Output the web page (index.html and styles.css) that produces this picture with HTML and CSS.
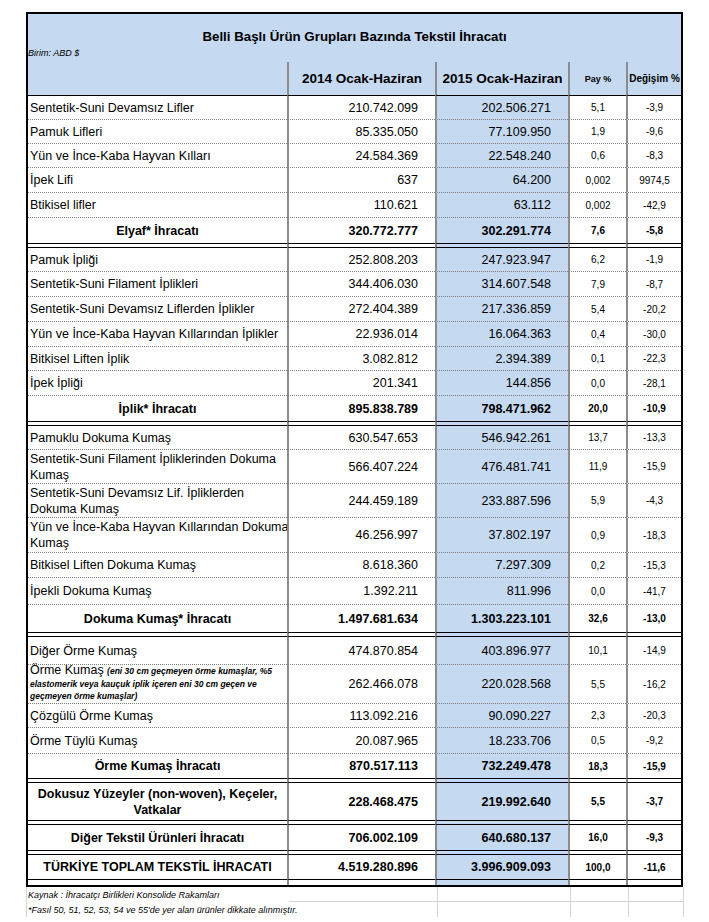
FILE: index.html
```html
<!DOCTYPE html>
<html lang="tr">
<head>
<meta charset="utf-8">
<title>Belli Başlı Ürün Grupları Bazında Tekstil İhracatı</title>
<link rel="stylesheet" href="styles.css">
</head>
<body>
<div class="page">
  <div class="sheet">
    <div class="title-block">
      <div class="title">Belli Başlı Ürün Grupları Bazında Tekstil İhracatı</div>
      <div class="unit">Birim: ABD $</div>
    </div>

    <div class="row head">
      <div class="c c1"></div>
      <div class="c c2"><span>2014 Ocak-Haziran</span></div>
      <div class="c c3"><span>2015 Ocak-Haziran</span></div>
      <div class="c c4"><span>Pay %</span></div>
      <div class="c c5"><span>Değişim %</span></div>
    </div>

    <!-- Elyaf -->
    <div class="row h24"><div class="c c1"><span>Sentetik-Suni Devamsız Lifler</span></div><div class="c c2"><span>210.742.099</span></div><div class="c c3"><span>202.506.271</span></div><div class="c c4"><span>5,1</span></div><div class="c c5"><span>-3,9</span></div></div>
    <div class="row h24"><div class="c c1"><span>Pamuk Lifleri</span></div><div class="c c2"><span>85.335.050</span></div><div class="c c3"><span>77.109.950</span></div><div class="c c4"><span>1,9</span></div><div class="c c5"><span>-9,6</span></div></div>
    <div class="row h24"><div class="c c1"><span>Yün ve İnce-Kaba Hayvan Kılları</span></div><div class="c c2"><span>24.584.369</span></div><div class="c c3"><span>22.548.240</span></div><div class="c c4"><span>0,6</span></div><div class="c c5"><span>-8,3</span></div></div>
    <div class="row h25"><div class="c c1"><span>İpek Lifi</span></div><div class="c c2"><span>637</span></div><div class="c c3"><span>64.200</span></div><div class="c c4"><span>0,002</span></div><div class="c c5"><span>9974,5</span></div></div>
    <div class="row h25"><div class="c c1"><span>Btikisel lifler</span></div><div class="c c2"><span>110.621</span></div><div class="c c3"><span>63.112</span></div><div class="c c4"><span>0,002</span></div><div class="c c5"><span>-42,9</span></div></div>
    <div class="row h25 total"><div class="c c1"><span>Elyaf* İhracatı</span></div><div class="c c2"><span>320.772.777</span></div><div class="c c3"><span>302.291.774</span></div><div class="c c4"><span>7,6</span></div><div class="c c5"><span>-5,8</span></div></div>
    <div class="row gap"><div class="c c1"></div><div class="c c2"></div><div class="c c3"></div><div class="c c4"></div><div class="c c5"></div></div>

    <!-- İplik -->
    <div class="row h24"><div class="c c1"><span>Pamuk İpliği</span></div><div class="c c2"><span>252.808.203</span></div><div class="c c3"><span>247.923.947</span></div><div class="c c4"><span>6,2</span></div><div class="c c5"><span>-1,9</span></div></div>
    <div class="row h25"><div class="c c1"><span>Sentetik-Suni Filament İplikleri</span></div><div class="c c2"><span>344.406.030</span></div><div class="c c3"><span>314.607.548</span></div><div class="c c4"><span>7,9</span></div><div class="c c5"><span>-8,7</span></div></div>
    <div class="row h25"><div class="c c1"><span>Sentetik-Suni Devamsız Liflerden İplikler</span></div><div class="c c2"><span>272.404.389</span></div><div class="c c3"><span>217.336.859</span></div><div class="c c4"><span>5,4</span></div><div class="c c5"><span>-20,2</span></div></div>
    <div class="row h25"><div class="c c1"><span>Yün ve İnce-Kaba Hayvan Kıllarından İplikler</span></div><div class="c c2"><span>22.936.014</span></div><div class="c c3"><span>16.064.363</span></div><div class="c c4"><span>0,4</span></div><div class="c c5"><span>-30,0</span></div></div>
    <div class="row h24"><div class="c c1"><span>Bitkisel Liften İplik</span></div><div class="c c2"><span>3.082.812</span></div><div class="c c3"><span>2.394.389</span></div><div class="c c4"><span>0,1</span></div><div class="c c5"><span>-22,3</span></div></div>
    <div class="row h25"><div class="c c1"><span>İpek İpliği</span></div><div class="c c2"><span>201.341</span></div><div class="c c3"><span>144.856</span></div><div class="c c4"><span>0,0</span></div><div class="c c5"><span>-28,1</span></div></div>
    <div class="row h25 total"><div class="c c1"><span>İplik* İhracatı</span></div><div class="c c2"><span>895.838.789</span></div><div class="c c3"><span>798.471.962</span></div><div class="c c4"><span>20,0</span></div><div class="c c5"><span>-10,9</span></div></div>
    <div class="row gap"><div class="c c1"></div><div class="c c2"></div><div class="c c3"></div><div class="c c4"></div><div class="c c5"></div></div>

    <!-- Dokuma -->
    <div class="row h24"><div class="c c1"><span>Pamuklu Dokuma Kumaş</span></div><div class="c c2"><span>630.547.653</span></div><div class="c c3"><span>546.942.261</span></div><div class="c c4"><span>13,7</span></div><div class="c c5"><span>-13,3</span></div></div>
    <div class="row h34"><div class="c c1"><div class="two">Sentetik-Suni Filament İpliklerinden Dokuma<br>Kumaş</div></div><div class="c c2"><span>566.407.224</span></div><div class="c c3"><span>476.481.741</span></div><div class="c c4"><span>11,9</span></div><div class="c c5"><span>-15,9</span></div></div>
    <div class="row h34"><div class="c c1"><div class="two">Sentetik-Suni Devamsız Lif. İpliklerden<br>Dokuma Kumaş</div></div><div class="c c2"><span>244.459.189</span></div><div class="c c3"><span>233.887.596</span></div><div class="c c4"><span>5,9</span></div><div class="c c5"><span>-4,3</span></div></div>
    <div class="row h35"><div class="c c1"><div class="two">Yün ve İnce-Kaba Hayvan Kıllarından Dokuma<br>Kumaş</div></div><div class="c c2"><span>46.256.997</span></div><div class="c c3"><span>37.802.197</span></div><div class="c c4"><span>0,9</span></div><div class="c c5"><span>-18,3</span></div></div>
    <div class="row h25"><div class="c c1"><span>Bitkisel Liften Dokuma Kumaş</span></div><div class="c c2"><span>8.618.360</span></div><div class="c c3"><span>7.297.309</span></div><div class="c c4"><span>0,2</span></div><div class="c c5"><span>-15,3</span></div></div>
    <div class="row h27"><div class="c c1"><span>İpekli Dokuma Kumaş</span></div><div class="c c2"><span>1.392.211</span></div><div class="c c3"><span>811.996</span></div><div class="c c4"><span>0,0</span></div><div class="c c5"><span>-41,7</span></div></div>
    <div class="row h27 total"><div class="c c1"><span>Dokuma Kumaş* İhracatı</span></div><div class="c c2"><span>1.497.681.634</span></div><div class="c c3"><span>1.303.223.101</span></div><div class="c c4"><span>32,6</span></div><div class="c c5"><span>-13,0</span></div></div>
    <div class="row gap"><div class="c c1"></div><div class="c c2"></div><div class="c c3"></div><div class="c c4"></div><div class="c c5"></div></div>

    <!-- Örme -->
    <div class="row h28"><div class="c c1"><span>Diğer Örme Kumaş</span></div><div class="c c2"><span>474.870.854</span></div><div class="c c3"><span>403.896.977</span></div><div class="c c4"><span>10,1</span></div><div class="c c5"><span>-14,9</span></div></div>
    <div class="row h39"><div class="c c1"><div class="knit">Örme Kumaş <em>(eni 30 cm geçmeyen örme kumaşlar, %5</em><br><em>elastomerik veya kauçuk iplik içeren eni 30 cm geçen ve</em><br><em>geçmeyen örme kumaşlar)</em></div></div><div class="c c2"><span>262.466.078</span></div><div class="c c3"><span>220.028.568</span></div><div class="c c4"><span>5,5</span></div><div class="c c5"><span>-16,2</span></div></div>
    <div class="row h24"><div class="c c1"><span>Çözgülü Örme Kumaş</span></div><div class="c c2"><span>113.092.216</span></div><div class="c c3"><span>90.090.227</span></div><div class="c c4"><span>2,3</span></div><div class="c c5"><span>-20,3</span></div></div>
    <div class="row h26"><div class="c c1"><span>Örme Tüylü Kumaş</span></div><div class="c c2"><span>20.087.965</span></div><div class="c c3"><span>18.233.706</span></div><div class="c c4"><span>0,5</span></div><div class="c c5"><span>-9,2</span></div></div>
    <div class="row h24 total"><div class="c c1"><span>Örme Kumaş İhracatı</span></div><div class="c c2"><span>870.517.113</span></div><div class="c c3"><span>732.249.478</span></div><div class="c c4"><span>18,3</span></div><div class="c c5"><span>-15,9</span></div></div>
    <div class="row gap"><div class="c c1"></div><div class="c c2"></div><div class="c c3"></div><div class="c c4"></div><div class="c c5"></div></div>

    <div class="row h37 total"><div class="c c1"><div class="two center">Dokusuz Yüzeyler (non-woven), Keçeler,<br>Vatkalar</div></div><div class="c c2"><span>228.468.475</span></div><div class="c c3"><span>219.992.640</span></div><div class="c c4"><span>5,5</span></div><div class="c c5"><span>-3,7</span></div></div>
    <div class="row gap"><div class="c c1"></div><div class="c c2"></div><div class="c c3"></div><div class="c c4"></div><div class="c c5"></div></div>

    <div class="row h25 total"><div class="c c1"><span>Diğer Tekstil Ürünleri İhracatı</span></div><div class="c c2"><span>706.002.109</span></div><div class="c c3"><span>640.680.137</span></div><div class="c c4"><span>16,0</span></div><div class="c c5"><span>-9,3</span></div></div>
    <div class="row gap"><div class="c c1"></div><div class="c c2"></div><div class="c c3"></div><div class="c c4"></div><div class="c c5"></div></div>

    <div class="row h24 total"><div class="c c1"><span>TÜRKİYE TOPLAM TEKSTİL İHRACATI</span></div><div class="c c2"><span>4.519.280.896</span></div><div class="c c3"><span>3.996.909.093</span></div><div class="c c4"><span>100,0</span></div><div class="c c5"><span>-11,6</span></div></div>
    <div class="row tail"><div class="c c1"></div><div class="c c2"></div><div class="c c3"></div><div class="c c4"></div><div class="c c5"></div></div>
  </div>

  <div class="notes">
    <div class="n n-a first"><span>Kaynak : İhracatçı Birlikleri Konsolide Rakamları</span></div>
    <div class="n n-b first"></div>
    <div class="n n-c first"></div>
    <div class="n n-d first"></div>
    <div class="n n-e first"></div>
    <div class="n n-a"><span>*Fasıl 50, 51, 52, 53, 54 ve 55'de yer alan ürünler dikkate alınmıştır.</span></div>
    <div class="n n-b"></div>
    <div class="n n-c"></div>
    <div class="n n-d"></div>
    <div class="n n-e"></div>
  </div>
</div>
</body>
</html>
```

FILE: styles.css
```css
* { box-sizing: border-box; }

body {
  margin: 0;
  background: #fff;
  color: #000;
  font-family: "Liberation Sans", Arial, sans-serif;
}

.page {
  padding: 12px 0 0 26px;
}

.sheet {
  width: 657px;
  border: 2px solid #000;
}

.title-block {
  height: 48px;
  background: #c5d9f1;
  padding-top: 15px;
}

.title {
  font-weight: bold;
  font-size: 13.3px;
  line-height: 16px;
  text-align: center;
}

.unit {
  font-style: italic;
  font-size: 9px;
  line-height: 11px;
  margin-top: 3px;
}

.row {
  display: grid;
  grid-template-columns: 259px 148px 133px 58px 55px;
}

.c {
  display: flex;
  align-items: center;
  font-size: 12.5px;
  white-space: nowrap;
  border-bottom: 1px dotted #7d7d7d;
  min-width: 0;
}

.c + .c {
  border-left: 2px solid #8c8c8c;
}

.c1 { padding-left: 2px; }

.c2, .c3 {
  justify-content: flex-end;
  padding-right: 17px;
}

.c3 { background: #c5d9f1; }

.c4, .c5 {
  justify-content: center;
  font-size: 10px;
}

.head {
  height: 34px;
  background: #c5d9f1;
}

.head .c {
  border-bottom: 1px solid #000;
  font-weight: bold;
  justify-content: center;
  padding: 0;
}

.head .c2, .head .c3 { font-size: 13.5px; }
.head .c4 { font-size: 9px; }
.head .c5 { font-size: 10px; }

.h24 { height: 24px; }
.h25 { height: 25px; }
.h26 { height: 26px; }
.h27 { height: 27px; }
.h28 { height: 28px; }
.h34 { height: 34px; }
.h35 { height: 35px; }
.h37 { height: 37px; }
.h39 { height: 39px; }

.two {
  line-height: 16px;
}

.two.center {
  text-align: center;
  width: 100%;
}

.knit {
  line-height: 11.5px;
}

.knit em {
  font-size: 8.5px;
  font-weight: bold;
  font-style: italic;
}

.total .c {
  font-weight: bold;
  border-bottom: none;
}

.total .c1 {
  justify-content: center;
  padding-left: 0;
}

.gap { height: 5px; }

.gap .c {
  border-top: 1px solid #000;
  border-bottom: 1px solid #000;
}

.tail { height: 6px; }

.tail .c {
  border-top: 1px solid #000;
  border-bottom: none;
}

/* Excel grid below the table */
.notes {
  width: 657px;
  display: grid;
  grid-template-columns: 262px 149px 133px 58px 55px;
  grid-template-rows: 15px 15px;
  border-left: 1px solid #d4d4d4;
}

.n {
  font-style: italic;
  font-size: 9px;
  white-space: nowrap;
  display: flex;
  align-items: center;
}

.n-a {
  padding-left: 1px;
  overflow: visible;
}

.n-b, .n-c, .n-d, .n-e {
  border-right: 1px solid #d4d4d4;
}

.first.n-b, .first.n-c, .first.n-d, .first.n-e {
  border-bottom: 1px solid #d4d4d4;
}
```
